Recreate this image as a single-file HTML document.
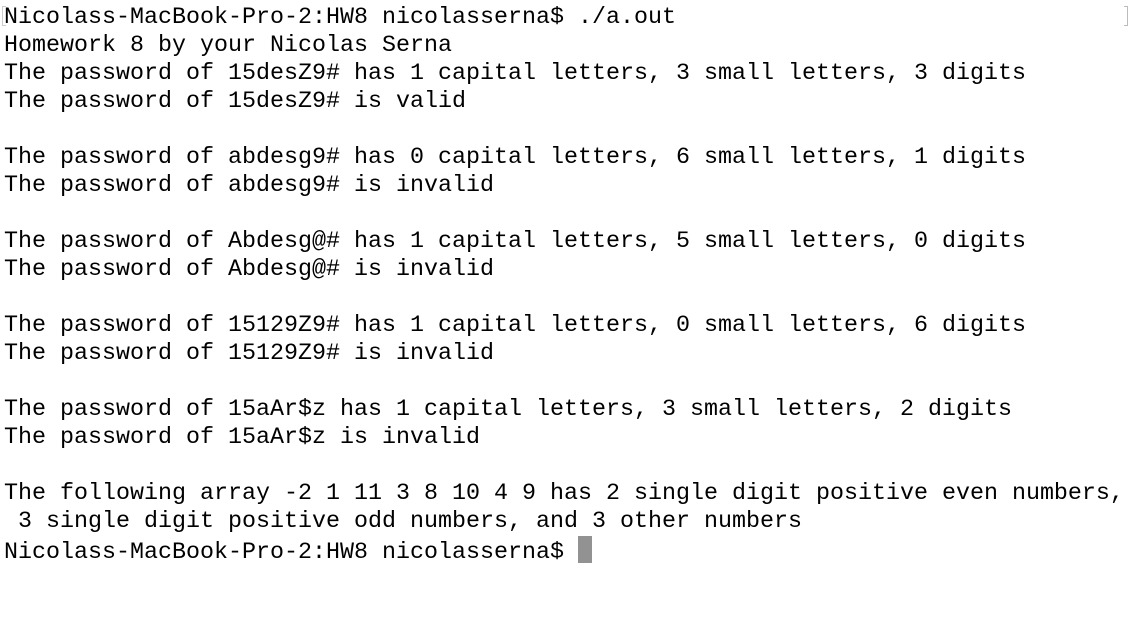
<!DOCTYPE html>
<html><head><style>
body{margin:0;background:#fff;width:1134px;height:618px;overflow:hidden}
pre{margin:0;position:absolute;left:4px;top:4px;font-family:"Liberation Mono",monospace;font-size:23.33px;line-height:28px;color:#000}
.c{display:inline-block;width:14px;height:27px;background:#929292;vertical-align:-5px}
.b{position:absolute;left:1124px;top:6px;width:3px;height:18px;border:1px solid #bbb;border-left:none}
.a{position:absolute;left:2px;top:6px;width:3px;height:18px;border:1px solid #ccc;border-right:none}
</style></head><body>
<div class="a"></div><div class="b"></div>
<pre>Nicolass-MacBook-Pro-2:HW8 nicolasserna$ ./a.out
Homework 8 by your Nicolas Serna
The password of 15desZ9# has 1 capital letters, 3 small letters, 3 digits
The password of 15desZ9# is valid

The password of abdesg9# has 0 capital letters, 6 small letters, 1 digits
The password of abdesg9# is invalid

The password of Abdesg@# has 1 capital letters, 5 small letters, 0 digits
The password of Abdesg@# is invalid

The password of 15129Z9# has 1 capital letters, 0 small letters, 6 digits
The password of 15129Z9# is invalid

The password of 15aAr$z has 1 capital letters, 3 small letters, 2 digits
The password of 15aAr$z is invalid

The following array -2 1 11 3 8 10 4 9 has 2 single digit positive even numbers,
 3 single digit positive odd numbers, and 3 other numbers
Nicolass-MacBook-Pro-2:HW8 nicolasserna$ <span class="c"></span></pre>
</body></html>
